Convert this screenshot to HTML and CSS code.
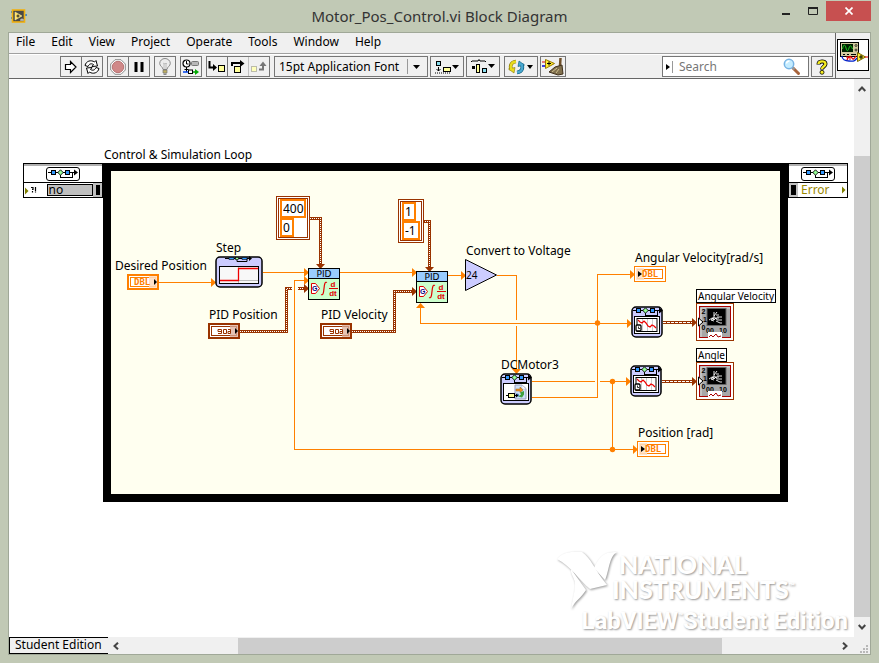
FILE: index.html
```html
<!DOCTYPE html>
<html lang="en">
<head>
<meta charset="utf-8">
<title>Motor_Pos_Control.vi Block Diagram</title>
<link rel="stylesheet" href="styles.css">
</head>
<body>
<header class="titlebar">
  <svg class="app-icon" width="16" height="14" viewBox="0 0 16 14" aria-hidden="true">
    <path d="M0 3h2M0 9h2M14 6h2" stroke="#4a8cc8" stroke-width="2"/>
    <rect x="1.5" y="1" width="12" height="12" fill="#4a4a46" stroke="#f0b010" stroke-width="1.600"/>
    <path d="M4 3l7 4-7 4z" fill="#ffe060" stroke="#fff3b0" stroke-width=".5"/>
    <path d="M5.500 7h3M7 5.500v3" stroke="#222"/>
    <path d="M9 11h4M11 9.500v2" stroke="#ddd"/>
  </svg>
  <h1>Motor_Pos_Control.vi Block Diagram</h1>
  <div class="window-buttons">
    <button class="min" aria-label="Minimize"><svg width="10" height="10" viewBox="0 0 10 10"><path d="M1 8h8" stroke="#222" stroke-width="2"/></svg></button>
    <button class="max" aria-label="Maximize"><svg width="10" height="8" viewBox="0 0 10 8"><path d="M.5 1v6.500h9V1" fill="none" stroke="#222"/><path d="M0 1h10" stroke="#222" stroke-width="2"/></svg></button>
    <button class="close" aria-label="Close"><svg width="8" height="8" viewBox="0 0 8 8"><path d="M.5 .5l7 7M7.500 .5l-7 7" stroke="#fff" stroke-width="1.700"/></svg></button>
  </div>
</header>

<main class="window">
  <div class="head">
    <div class="bars">
      <nav class="menubar">
        <a href="#">File</a><a href="#">Edit</a><a href="#">View</a><a href="#">Project</a><a href="#">Operate</a><a href="#">Tools</a><a href="#">Window</a><a href="#">Help</a>
      </nav>
      <div class="toolbar">
        <div class="group">
          <button aria-label="Run"><svg width="14" height="14" viewBox="0 0 14 14"><path d="M1.500 4.500h5v-3l5.500 5.500-5.500 5.500v-3h-5z" fill="#fff" stroke="#000" stroke-width="1.200"/></svg></button>
          <button aria-label="Run continuously"><svg width="18" height="16" viewBox="0 0 18 16"><g fill="#fff" stroke="#000"><path d="M2 6.500C3 2 8 .5 11.500 3l1.500-1.500 1.500 5.500-5.500.5 1.500-2C8 4 6 5 5 7.500z"/><path d="M16 9.500c-1 4.500-6 6-9.500 3.500L5 14.500 3.500 9l5.500-.5-1.500 2c2.500 1.500 4.500.5 5.500-2z"/></g></svg></button>
        </div>
        <div class="group">
          <button class="off" aria-label="Abort"><svg width="16" height="16" viewBox="0 0 16 16"><path d="M5 .7h6l4.300 4.300v6L11 15.300H5L.7 11V5z" fill="#fff" stroke="#8a8a8a"/><circle cx="8" cy="8" r="5.700" fill="#d08888" stroke="#b87474"/></svg></button>
          <button aria-label="Pause"><svg width="10" height="12" viewBox="0 0 10 12"><path d="M2 1v10M8 1v10" stroke="#000" stroke-width="3"/></svg></button>
        </div>
        <div class="group">
          <button aria-label="Highlight execution"><svg width="12" height="17" viewBox="0 0 12 17"><path d="M4 11.500C4 9 .7 8 .7 5.500a5.300 5 0 0 1 10.600 0C11.300 8 8 9 8 11.500z" fill="#ececec" stroke="#888"/><path d="M4 5l1.500 1L6 5l1 1 1-1M5 6v5M7 6v5" fill="none" stroke="#aaa" stroke-width=".7"/><path d="M4 12h4v3H4z" fill="#c0b060" stroke="#777" stroke-width=".7"/><path d="M4.500 16.200h3" stroke="#555"/></svg></button>
        </div>
        <div class="group">
          <button aria-label="Retain wire values"><svg width="18" height="16" viewBox="0 0 18 16"><circle cx="4.500" cy="4.500" r="3.500" fill="#fff" stroke="#000" stroke-width="1.200"/><path d="M4.500 2v3h2M4.500 8v5M2.500 10.500h4" fill="none" stroke="#000"/><rect x="9.500" y="2.500" width="7" height="4" rx="1" fill="#b8b8b8" stroke="#777"/><path d="M1 13h5" stroke="#0044ee" stroke-width="1.500"/><rect x="6.500" y="11" width="4" height="3.500" fill="#fff" stroke="#000"/><path d="M11 13h3" stroke="#090" stroke-width="1.500"/><path d="M13 10l4 3-4 3z" fill="#0a0"/></svg></button>
        </div>
        <div class="group">
          <button aria-label="Step into"><svg width="18" height="14" viewBox="0 0 18 14"><path d="M1.500 1v6.500H6" fill="none" stroke="#000" stroke-width="2"/><path d="M5 4l4 3.500L5 11z"/><rect x="10.500" y="5.500" width="6" height="6" fill="#ffff99" stroke="#000"/></svg></button>
          <button aria-label="Step over"><svg width="16" height="14" viewBox="0 0 16 14"><path d="M2 6V3h9" fill="none" stroke="#000" stroke-width="2"/><path d="M10 0l4.500 3.500L10 7z"/><rect x="4.500" y="6.500" width="6" height="6" fill="#ffff99" stroke="#000"/></svg></button>
          <button class="off" aria-label="Step out"><svg width="16" height="12" viewBox="0 0 16 12"><rect x=".5" y="5.500" width="5" height="5" fill="#ffffbb" stroke="#bba"/><path d="M8 8.500h4V4" fill="none" stroke="#777" stroke-width="2"/><path d="M8.500 5L12 .5 15.500 5z" fill="#777"/></svg></button>
        </div>
        <div class="cluster">
          <div class="group font">
            <select aria-label="Text settings"><option>15pt Application Font</option></select>
            <svg width="8" height="4" viewBox="0 0 8 4" aria-hidden="true"><path d="M0 0h7L3.500 4z"/></svg>
          </div>
          <div class="group drop"><button aria-label="Align objects"><svg width="26" height="14" viewBox="0 0 26 14"><rect x="2.500" y="1.500" width="4" height="4" fill="#8de" stroke="#000"/><path d="M4.500 7v4M2.500 9l2 2 2-2" fill="none" stroke="#000"/><rect x="9.500" y="7.500" width="7" height="4" fill="#ff9" stroke="#000"/><path d="M1 13h16" stroke="#000" stroke-dasharray="1 1"/><path d="M18 5h7l-3.500 4z"/></svg></button></div>
          <div class="group drop"><button aria-label="Distribute objects"><svg width="26" height="15" viewBox="0 0 26 15"><path d="M1 3l1-1h6l1-1.500L10 2h5l1 1" fill="none" stroke="#000"/><path d="M2 7h3v3H2z"/><rect x="6.500" y="5.500" width="3" height="8" fill="#ff9" stroke="#000"/><rect x="12.500" y="9.500" width="4" height="4" fill="#8de" stroke="#000"/><path d="M18 5h7l-3.500 4z"/></svg></button></div>
        </div>
        <div class="cluster">
          <div class="group drop"><button aria-label="Reorder"><svg width="26" height="16" viewBox="0 0 26 16"><g fill="none"><path d="M8 2.500C3 3 1.500 7 3.500 11" stroke="#887700" stroke-width="3.600"/><path d="M9 13.500c5-.5 6.500-4.500 4.500-8.500" stroke="#005577" stroke-width="3.600"/></g><path d="M.5 10L7 8.500 6 14z" fill="#e8dc20" stroke="#887700" stroke-width=".6"/><path d="M16.500 6L10 7.500 11 2z" fill="#4aa8d0" stroke="#005577" stroke-width=".6"/><g fill="none"><path d="M8 2.500C3 3 1.500 7 3.500 11" stroke="#e8dc20" stroke-width="2.400"/><path d="M9 13.500c5-.5 6.500-4.500 4.500-8.500" stroke="#4aa8d0" stroke-width="2.400"/></g><path d="M19 6h6l-3 4z"/></svg></button></div>
          <div class="group tidy"><button aria-label="Clean up diagram"><svg width="22" height="18" viewBox="0 0 22 18"><path d="M0 4h4" stroke="#d00"/><path d="M0 8h4" stroke="#00d" stroke-width="1.500"/><path d="M3.500 1.500l9 4-9 5z" fill="#ffee33" stroke="#997700"/><path d="M5 5.500h4M7 3.500v4" stroke="#000"/><path d="M18.500 0L18 8" stroke="#70502a" stroke-width="2.500"/><path d="M13 9l7-2 1 9-5 1-9-3z" fill="#80704e" stroke="#40301c"/><path d="M10 14l5-4M14 15l3-4" stroke="#d0c090"/></svg></button></div>
        </div>
        <div class="search">
          <button aria-label="Search options"><svg width="4" height="6" viewBox="0 0 4 6"><path d="M0 0l4 3-4 3z"/></svg></button>
          <input type="search" placeholder="Search" aria-label="Search">
          <svg width="18" height="18" viewBox="0 0 18 18" aria-hidden="true"><path d="M10 10l5.500 5.500" stroke="#a8643c" stroke-width="3" stroke-linecap="round"/><path d="M9.500 9.500l2 2" stroke="#999" stroke-width="2"/><circle cx="6" cy="6" r="4.700" fill="#c4ecff" stroke="#78b4e4" stroke-width="1.500"/><path d="M3.500 5.500a3 3 0 0 1 3-2.500" stroke="#fff" fill="none" stroke-width="1.500"/></svg>
        </div>
        <div class="group"><button aria-label="Context help"><svg width="12" height="16" viewBox="0 0 12 16"><path d="M2.500 5.500C2.500 1.500 9.500 1.500 9.500 5c0 2.500-3.500 2.500-3.500 5.500" fill="none" stroke="#000" stroke-width="4"/><path d="M2.500 5C2.500 1.500 9.500 1.500 9.500 5c0 2.500-3.500 2.500-3.500 5" fill="none" stroke="#f4ec20" stroke-width="2.400"/><circle cx="6" cy="13.300" r="2" fill="#f4ec20" stroke="#000" stroke-width=".8"/></svg></button></div>
      </div>
    </div>
    <div class="vi-pane">
      <svg width="32" height="32" viewBox="0 0 32 32" role="img" aria-label="VI icon">
        <rect x=".5" y=".5" width="31" height="31" fill="#fff" stroke="#000"/>
        <rect x="3.500" y="3.500" width="18" height="14" fill="#d4cca0" stroke="#000"/>
        <rect x="5" y="5" width="11" height="8" fill="#002200"/>
        <path d="M5.500 10c1-5 2.500-5 3.500-1s2 3 3 0 2-3 3.500 1" fill="none" stroke="#22cc22"/>
        <circle cx="19" cy="6.500" r="1" fill="none" stroke="#000" stroke-width=".7"/><circle cx="19" cy="11" r="1" fill="none" stroke="#000" stroke-width=".7"/>
        <path d="M6 15.500h2M10 15.500h2M14 15.500h5" stroke="#000"/>
        <path d="M5 17c0 3 3 5 7 5s5 1 8-3" fill="none" stroke="#0022cc" stroke-width="1.300"/>
        <path d="M10 21c1-4 4-4 5-2s2 1 4-2" fill="none" stroke="#e00000" stroke-width="1.300"/><path d="M9 18h4v3" fill="none" stroke="#e00000"/>
        <path d="M20.500 13.500l8 4.500-8 4.500z" fill="#ffee33" stroke="#776600"/><path d="M28 18h3" stroke="#e00000"/><path d="M22 18h4M24 16v4" stroke="#000"/>
      </svg>
    </div>
  </div>

  <div class="workspace">
    <section class="canvas" aria-label="Block diagram">
      <div class="watermark" aria-hidden="true">
        <svg width="62" height="50" viewBox="0 2 62 50"><g class="mark"><path d="M14 19c-1 6 5 9 4 18-1 8-3 15-4 22 4-8 10-11 15-19z"/><path d="M37 18c6-12 9-16 23-16-8 4-8 20-12 28z"/><path d="M0 9c5-6 12-8 25-7 9 6 12 17 25 33l-17 4C22 30 14 16 0 9z"/></g></svg>
        <div class="company">NATIONAL<br>INSTRUMENTS<sup>™</sup></div>
        <div class="edition">LabVIEW<sup>™</sup>Student Edition</div>
      </div>

      <div class="loop"></div>
      <svg class="art" width="845" height="558" viewBox="9 79 845 558" aria-hidden="true">
        <defs>
          <symbol id="sim" viewBox="0 0 34 14" width="34" height="14" overflow="visible">
            <path d="M2 5.500h28M14.500 8v2.500h12V6" fill="none" stroke="#000" shape-rendering="crispEdges"/>
            <path d="M28 2.500l4 3-4 3z"/>
            <rect x="5.500" y="3.500" width="4" height="4" fill="#3399ff" stroke="#000"/>
            <path d="M14.500 2.800l2.700 2.700-2.700 2.700-2.700-2.700z" fill="#99ff99" stroke="#000" stroke-width=".9"/>
            <rect x="19.500" y="3.500" width="4" height="4" fill="#3399ff" stroke="#000"/>
          </symbol>
          <symbol id="pid" viewBox="0 0 32 32" width="32" height="32">
            <rect x=".5" y=".5" width="31" height="31" fill="#ccffcc" stroke="#000"/>
            <rect x=".5" y=".5" width="31" height="10" fill="#99ccff" stroke="#000"/>
            <text x="16" y="9" class="tiny">PID</text>
            <path d="M3.500 15.500h4l4 5-4 5h-4z" fill="#fff" stroke="#e00000"/>
            <text x="4" y="23" class="gain-g">G</text>
            <path d="M19 14.500c-2-1-2.500 1-3 6s-1 7-3 6" fill="none" stroke="#e00000" stroke-width="1.200"/>
            <path d="M21 20.500h9" stroke="#e00000"/>
            <text x="25" y="19" class="frac">d</text><text x="25" y="28" class="frac">dt</text>
          </symbol>
          <symbol id="trend" viewBox="0 0 32 32" width="32" height="32">
            <rect x="1" y="1" width="30" height="30" rx="4" fill="#ccccff" stroke="#000" stroke-width="1.500"/>
            <use href="#sim" x="0" y="-1"/>
            <rect x="3.500" y="10.500" width="25" height="17" fill="#fff" stroke="#000"/>
            <rect x="6" y="12.500" width="20" height="13" fill="#fff" stroke="#000"/>
            <path d="M11.500 13v12M16.500 13v12M21.500 13v12" stroke="#ccc"/>
            <path d="M7 14l2 2 2 1 2-2 2 2 2 3 2 1 2-2 2 1 2 2" fill="none" stroke="#ee0000" stroke-width="1.200"/>
            <rect x="5" y="19" width="5" height="6" rx="1" fill="#fff" stroke="#000" stroke-width="1.300"/><path d="M7.500 20.500v2h1.500" stroke="#000" fill="none" stroke-width=".8"/>
          </symbol>
          <symbol id="chart" viewBox="0 0 38 38" width="38" height="38">
            <rect x=".5" y=".5" width="37" height="37" fill="#fff" stroke="#993300"/>
            <rect x="3.500" y="3.500" width="31" height="31" fill="#a8a8a8" stroke="#aa0000"/>
            <path d="M5 34V5h29" fill="none" stroke="#ddd"/>
            <rect x="11" y="5.500" width="19" height="17" fill="#000" stroke="#666"/>
            <path d="M13 17l3-2 2 2 2-2 1 2h5M18 9v6l-3 2 3 1M18 13l3-4M20 12h3M21 14h5M20 18l4 2h2M16 15h7" fill="none" stroke="#fff" stroke-width=".9"/>
            <text x="5.500" y="11" class="axis">2</text><text x="7" y="19" class="axis">1</text><text x="5.500" y="27" class="axis">0</text>
            <text x="10" y="30" class="axis">00</text><text x="23" y="30" class="axis">10</text>
            <rect x="12" y="29" width="14" height="7" fill="#fff"/><path d="M13 34l2-2 2 2 3-3 2 3 3-1" fill="none" stroke="#aa0000"/>
            <path d="M2.500 15l4.500 4-4.500 4z" fill="#fff" stroke="#000"/>
          </symbol>
          <symbol id="cluster-terminal" viewBox="0 0 32 16" width="32" height="16">
            <rect x="1" y="1" width="30" height="14" fill="#fff" stroke="#993300" stroke-width="2"/>
            <rect x="3.500" y="3.500" width="25" height="9" fill="#fff" stroke="#993300"/>
            <path d="M22 2h8v12h-8z" fill="#dcae98" opacity=".75"/>
            <path d="M10 6.500h3.500v4H10M10 6.500v2h3.500M15.500 6.500h3v4h-3zM20 6.500h2.500v4H20v-2h2.500" fill="none" stroke="#993300"/>
            <path d="M27 5l3 3-3 3z"/>
          </symbol>
          <symbol id="dbl-out" viewBox="0 0 32 16" width="32" height="16">
            <rect x=".5" y=".5" width="31" height="15" fill="#fff" stroke="#ff8000"/>
            <rect x="3.500" y="3.500" width="25" height="9" fill="#fff" stroke="#ff8000"/>
            <path d="M2 2h8v12H2z" fill="#ffe0c4" opacity=".85"/>
            <path d="M4 5l4 3-4 3z"/>
            <text x="8" y="11" class="dbl">DBL</text>
          </symbol>
        </defs>

        <g class="wire">
          <path d="M159 282.500H212M263 272.500H305M305 280.500H294.500V449.500H634M340 272.500H413M448 275.500H462M497 275.500H516.500V320M516.500 326V371M420.500 307V323.500H628M631 274.500H597.500V397.500H532M532 381.500H595M600 381.500H627M612.500 381V449"/>
        </g>
        <g class="solid">
          <path d="M211 278l5 4.500-5 4.500zM304 268l5 4.500-5 4.500zM304 276l5 4.500-5 4.500zM412 268l5 4.500-5 4.500zM461 271l5 4.500-5 4.500zM512 369h9l-4.500 5zM416 308h9l-4.500-5zM627 319l5 4.500-5 4.500zM630 270l5 4.500-5 4.500zM626 377l5 4.500-5 4.500zM633 445l5 4.500-5 4.500z"/>
          <circle cx="597.500" cy="323" r="2.700"/><circle cx="612.500" cy="381.500" r="2.700"/><circle cx="612.500" cy="449.500" r="2.700"/>
        </g>
        <path class="bundle" d="M240 331.500H286.500V288.500H292M298 288.500H305M310 218.500H320.500V265M352 331.500H394.500V291.500H413M423 221.500H429.500V268M663 322.500H693M662 381.500H693"/>
        <path class="bundle-core" d="M240 331.500H286.500V288.500H292M298 288.500H305M310 218.500H320.500V265M352 331.500H394.500V291.500H413M423 221.500H429.500V268"/>
        <path class="bundle-core long" d="M663 322.500H693M662 381.500H693"/>
        <path class="brown" d="M304 284l5 4.500-5 4.500zM316 264h9l-4.500 5zM412 287l5 4.500-5 4.500zM425 267h9l-4.500 5zM692 318l5 4.500-5 4.500zM692 377l5 4.500-5 4.500z"/>

        <g transform="translate(127 274)">
          <rect x="1" y="1" width="30" height="14" fill="#fff" stroke="#ff8000" stroke-width="2"/>
          <rect x="3.500" y="3.500" width="25" height="9" fill="#fff" stroke="#ff8000"/>
          <path d="M22 2h8v12h-8z" fill="#ffdcc0" opacity=".85"/>
          <text x="7" y="11" class="dbl">DBL</text><path d="M27 5l3 3-3 3z"/>
        </g>
        <use href="#cluster-terminal" x="208" y="323"/><use href="#cluster-terminal" x="320" y="323"/>
        <use href="#dbl-out" x="634" y="266"/><use href="#dbl-out" x="637" y="441"/>
        <g transform="translate(215 256)">
          <rect x="1" y="1" width="46" height="30" rx="4" fill="#ccccff" stroke="#000" stroke-width="1.500"/>
          <path d="M10 2.500h26" stroke="#000"/><path d="M14 1.500h5v2h-5zM27 1.500h5v2h-5z" fill="#3399ff" stroke="#000" stroke-width=".6"/><path d="M22 2v3.500h10V3" fill="none" stroke="#000"/><rect x="20.500" y="1.500" width="3" height="2" fill="#99ff99" stroke="#000" stroke-width=".6"/><path d="M34 0l3 2.500-3 2.500z"/>
          <rect x="4.500" y="10.500" width="39" height="17" fill="#f8f8f8" stroke="#000"/>
          <path d="M23.500 11v16M5 24.500h38" stroke="#bbb"/>
          <path d="M5 24.500h18.500V12.500H43" fill="none" stroke="#ee0000" stroke-width="1.300"/>
        </g>
        <use href="#pid" x="308" y="268"/><use href="#pid" x="416" y="271"/>
        <path d="M465.500 259.500v31l31-15.500z" fill="#ccccff" stroke="#000"/>
        <text x="466" y="279" class="gain">24</text>
        <g transform="translate(500 373)">
          <rect x="1" y="1" width="30" height="30" rx="4" fill="#ccccff" stroke="#000" stroke-width="1.500"/>
          <use href="#sim" x="0" y="-1"/>
          <rect x="3.500" y="10.500" width="25" height="17" fill="#fff" stroke="#000"/>
          <path d="M15 12h7l4 3.500V26H15z" fill="#cce0f8" stroke="#99b"/><path d="M22 12v4h4z" fill="#fff" stroke="#aac" stroke-width=".5"/>
          <path d="M16 16h4v-2l3 3-3 2.500V18h-4z" fill="#f09020" stroke="#a06010" stroke-width=".5"/><path d="M24 18l-4 1.500 1 2-3 2 4 1 2-3z" fill="#40a040"/><circle cx="17.500" cy="22" r="1.500" fill="#4488cc"/>
          <path d="M6 22.500h12" stroke="#000"/><rect x="8.500" y="20.500" width="6" height="4" fill="#ffff99" stroke="#000"/><path d="M16 20.500l2.500 2-2.500 2z"/>
        </g>
        <use href="#trend" x="631" y="306"/><use href="#trend" x="630" y="365"/>
        <use href="#chart" x="696" y="303"/><use href="#chart" x="696" y="362"/>
      </svg>

      <div class="io io-in">
        <div class="io-row"><svg width="34" height="14" viewBox="0 0 34 14"><rect x=".5" y=".5" width="33" height="13" rx="2.500" fill="#fff" stroke="#000"/><use href="#sim"/></svg></div>
        <div class="io-row"><svg width="12" height="9" viewBox="0 0 12 9"><path d="M0 1.500l3.500 3.500L0 8.500z" fill="#808000"/><path d="M6 1.500h2v2h-1M7.500 5v1.500M10.500 1v4M10.500 5.500v1" stroke="#000" fill="none" stroke-width="1.200"/></svg><span class="value">no</span><i class="node-edge"></i></div>
      </div>
      <div class="io io-out">
        <div class="io-row"><svg width="34" height="14" viewBox="0 0 34 14"><rect x=".5" y=".5" width="33" height="13" rx="2.500" fill="#fff" stroke="#000"/><use href="#sim"/></svg></div>
        <div class="io-row"><i class="node-edge"></i><span class="error">Error</span><svg width="4" height="8" viewBox="0 0 4 8"><path d="M0 .5L3.500 4 0 7.500z" fill="#808000"/></svg></div>
      </div>

      <div class="const const-position"><input aria-label="Position range high" value="400" size="3"><input aria-label="Position range low" class="narrow" value="0" size="1"></div>
      <div class="const const-velocity"><input aria-label="Velocity range high" class="narrow" value="1" size="1"><input aria-label="Velocity range low" value="-1" size="2"></div>

      <span class="label l-loop">Control &amp; Simulation Loop</span>
      <span class="label l-desired">Desired Position</span>
      <span class="label l-step">Step</span>
      <span class="label l-pidpos">PID Position</span>
      <span class="label l-pidvel">PID Velocity</span>
      <span class="label l-volt">Convert to Voltage</span>
      <span class="label l-motor">DCMotor3</span>
      <span class="label l-angvel">Angular Velocity[rad/s]</span>
      <span class="label l-pos">Position [rad]</span>
      <span class="tag t-angvel">Angular Velocity</span>
      <span class="tag t-angle">Angle</span>
    </section>
    <div class="vscroll">
      <button aria-label="Scroll up"><svg width="8" height="6" viewBox="0 0 8 6"><path d="M.7 5L4 1.500 7.300 5" fill="none" stroke="#444" stroke-width="2"/></svg></button>
      <div class="track"><div class="thumb"></div></div>
      <button aria-label="Scroll down"><svg width="8" height="6" viewBox="0 0 8 6"><path d="M.7 1L4 4.500 7.300 1" fill="none" stroke="#444" stroke-width="2"/></svg></button>
    </div>
  </div>

  <footer class="bottom">
    <div class="edition-tab">Student Edition</div>
    <button aria-label="Scroll left"><svg width="6" height="8" viewBox="0 0 6 8"><path d="M5 .7L1.500 4 5 7.300" fill="none" stroke="#444" stroke-width="2"/></svg></button>
    <div class="track"><div class="thumb"></div></div>
    <button aria-label="Scroll right"><svg width="6" height="8" viewBox="0 0 6 8"><path d="M1 .7L4.500 4 1 7.300" fill="none" stroke="#444" stroke-width="2"/></svg></button>
    <svg class="grip" width="8" height="8" viewBox="0 0 8 8" aria-hidden="true"><path d="M6 0h2v2H6zM3 3h2v2H3zM6 3h2v2H6zM0 6h2v2H0zM3 6h2v2H3zM6 6h2v2H6z" fill="#b8b8b8"/></svg>
  </footer>
</main>
</body>
</html>
```
FILE: styles.css
```css
* { box-sizing: border-box; }
html, body { height: 100%; }
body {
  margin: 0;
  padding: 0 8px 8px;
  display: flex;
  flex-direction: column;
  background: #c1c9b5;
  color: #000;
  font: 12px/16px "Noto Sans", "Open Sans", sans-serif;
}
button, input, select { font: inherit; color: inherit; margin: 0; border: 0; padding: 0; border-radius: 0; background: none; }
button { display: flex; align-items: center; justify-content: center; }
svg { display: block; flex: none; }

.titlebar { height: 32px; flex: none; display: grid; grid-template-columns: 1fr auto 1fr; align-items: center; }
.titlebar .app-icon { margin-left: 3px; }
.titlebar h1 { margin: 0; font-size: 15px; line-height: 20px; font-weight: 400; color: #333; }
.window-buttons { display: flex; align-self: start; justify-content: flex-end; }
.window-buttons button { width: 27px; height: 20px; margin-top: 1px; }
.window-buttons .close { width: 45px; background: #c75050; }

.window { flex: 1; min-height: 0; display: flex; flex-direction: column; border: 1px solid #a0a898; background: #f0f0f0; }
.head { display: flex; flex: none; border-bottom: 1px solid #666; }
.bars { flex: 1; border-right: 1px solid #666; }
.menubar { display: flex; height: 21px; gap: 16px; padding: 0 7px; border-bottom: 1px solid #a0a0a0; }
.menubar a { color: inherit; text-decoration: none; line-height: 18px; }
.toolbar { display: flex; align-items: center; gap: 4px; padding: 1px 2px 1px 51px; border-top: 1px solid #fff; }
.group { display: flex; height: 21px; border: 1px solid #767676; }
.group button { width: 20px; }
.group button + button { width: 21px; border-left: 1px solid #767676; }
.group button.off { background: #f0f0f0; border-color: #c0c0c0; }
.cluster { display: flex; gap: 2px; }
.font { width: 154px; align-items: center; padding-right: 6px; gap: 5px; }
.font select { appearance: none; flex: 1; height: 15px; line-height: 15px; padding-left: 4px; border-right: 1px solid #999; }
.drop button { width: 32px; }
.tidy button { width: 24px; }
.search { display: flex; align-items: center; width: 147px; height: 21px; margin-left: auto; border: 1px solid #767676; background: #fff; padding-right: 7px; }
.search button { width: 10px; height: 12px; border-right: 1px solid #999; }
.search input { flex: 1; min-width: 0; height: 19px; padding-left: 6px; outline: 0; }
.search input::placeholder { color: #777; opacity: 1; }
.search + .group { margin-left: -2px; }
.vi-pane { width: 34px; padding: 6px 1px; }

.workspace { flex: 1; min-height: 0; display: flex; }
.canvas { position: relative; flex: 1; overflow: hidden; background: #fff; }
.art { position: absolute; left: 0; top: 0; }
.loop { position: absolute; left: 94px; top: 84px; width: 685px; height: 339px; border: 8px solid #000; background: #fffff0; }

.wire path { fill: none; stroke: #ff8000; shape-rendering: crispEdges; }
.solid { fill: #ff8000; }
.bundle { fill: none; stroke: #993300; stroke-width: 3; shape-rendering: crispEdges; }
.bundle-core { fill: none; stroke: #fff; stroke-dasharray: 1 1; shape-rendering: crispEdges; }
.long { stroke-dasharray: 3 1; }
.brown { fill: #993300; }
.tiny { font: 9px "DejaVu Sans", sans-serif; text-anchor: middle; }
.gain-g { font: bold 7px "Liberation Sans", sans-serif; fill: #000080; }
.frac { font: bold 8px "Liberation Sans", sans-serif; fill: #e00000; text-anchor: middle; }
.dbl { font: bold 9px "DejaVu Sans Mono", monospace; fill: #ff8000; }
.axis { font: bold 7px "Liberation Sans", sans-serif; fill: #000; }
.gain { font: 10px "Noto Sans", sans-serif; }

.io { position: absolute; top: 84px; height: 35px; border: 1px solid #000; background: #fff; }
.io-in { left: 14px; width: 80px; }
.io-out { left: 779px; width: 60px; }
.io-row { display: flex; align-items: center; justify-content: center; height: 19px; border-top: 2px solid #b0b0b0; border-bottom: 1px solid #000; }
.io-row + .io-row { height: 14px; border: 0; justify-content: space-between; }
.io-in .io-row + .io-row { padding-left: 1px; }
.io-out .io-row + .io-row { padding-right: 1px; }
.value { width: 46px; height: 12px; margin-left: 9px; padding-left: 1px; border: 1px solid #000; background: #c0c0c0; line-height: 10px; }
.node-edge { align-self: stretch; width: 9px; background: #000; border: 2px solid #c0c0c0; }
.io-in .node-edge { border-left-width: 3px; }
.error { flex: 1; padding-left: 3px; color: #998800; line-height: 14px; }

.const { position: absolute; display: flex; flex-direction: column; align-items: flex-start; background: #fff; border: 1px solid #993300; outline: 1px solid #fff; box-shadow: 0 0 0 2px #993300; padding: 0 1px 1px; }
.const-position { left: 269px; top: 119px; width: 30px; height: 40px; }
.const-velocity { left: 391px; top: 122px; width: 22px; height: 40px; }
.const input { width: 100%; height: 19px; padding-left: 1px; border: 2px solid #ff8000; background: #fff; line-height: 15px; }
.const .narrow { width: 14px; }

.label { position: absolute; white-space: nowrap; }
.l-loop { left: 95px; top: 68px; }
.l-desired { left: 106px; top: 179px; }
.l-step { left: 207px; top: 161px; }
.l-pidpos { left: 200px; top: 228px; }
.l-pidvel { left: 312px; top: 228px; }
.l-volt { left: 457px; top: 164px; }
.l-motor { left: 492px; top: 278px; }
.l-angvel { left: 626px; top: 171px; }
.l-pos { left: 629px; top: 346px; }
.tag { position: absolute; left: 687px; height: 14px; padding: 0 1px; border: 1px solid #000; background: #fff; font-size: 10px; line-height: 12px; white-space: nowrap; }
.t-angvel { top: 210px; }
.t-angle { top: 269px; }

.watermark { position: absolute; right: 6px; bottom: 0; display: grid; grid-template-columns: 55px 236px; row-gap: 3px; color: #fff; text-shadow: 1px 1px 2px #999; }
.watermark svg { overflow: visible; }
.mark { fill: #fff; filter: drop-shadow(1px 1px 1px #999); }
.company { font: 900 25px/25px Lato, sans-serif; text-indent: 7px; }
.company br + sup { text-indent: 0; }
.watermark sup { font-size: 8px; line-height: 0; vertical-align: 10px; }
.edition { grid-column: 1 / 3; justify-self: end; font: bold 24px/32px Roboto, sans-serif; white-space: nowrap; }

.vscroll { width: 16px; display: flex; flex-direction: column; flex: none; }
.vscroll button { height: 20px; width: 16px; }
.vscroll .track { flex: 1; display: flex; flex-direction: column; justify-content: flex-end; }
.vscroll .thumb { height: 89%; background: #cdcdcd; }
.bottom { display: flex; align-items: center; height: 17px; flex: none; }
.bottom button { width: 17px; height: 16px; }
.bottom .track { flex: 1; height: 16px; }
.bottom .thumb { height: 16px; width: 68%; margin-left: 16%; background: #cdcdcd; }
.edition-tab { height: 17px; padding: 0 6px 0 5px; border: 1px solid #000; border-right: 0; line-height: 14px; }
.grip { align-self: flex-end; margin: 0 2px 1px 7px; }
```
